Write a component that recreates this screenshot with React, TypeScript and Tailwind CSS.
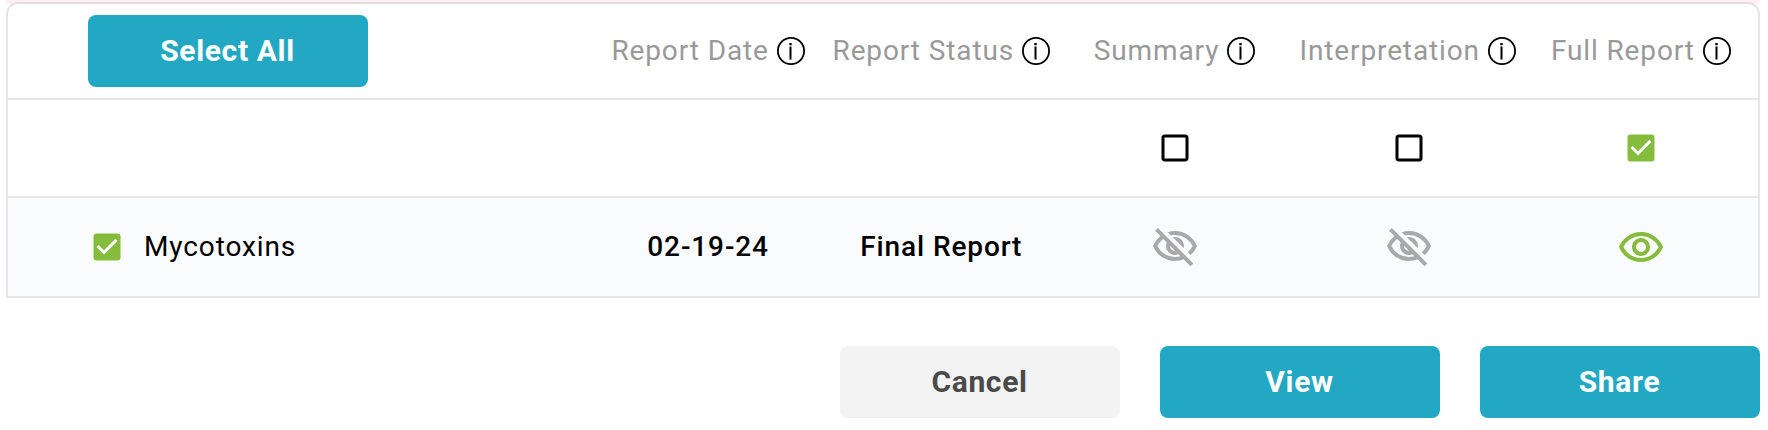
import clsx from 'clsx'
import {
  MdCheckBox,
  MdCheckBoxOutlineBlank,
  MdOutlineVisibility,
  MdOutlineVisibilityOff,
} from 'react-icons/md'

const columns = [
  'Report Date',
  'Report Status',
  'Summary',
  'Interpretation',
  'Full Report',
]

const rowClass =
  'grid grid-cols-[584px_1fr_1fr_1fr_1fr_1fr] items-center border-[#e5e5ea]'

function InfoIcon() {
  return (
    <svg className="size-7 shrink-0" viewBox="0 0 28 28" fill="none">
      <circle cx="14" cy="14" r="13.1" stroke="#000" strokeWidth="1.8" />
      <path d="M12.3 6h2.4v2.2h-2.4zM12.5 9.6h2v12.8h-2z" fill="#000" />
    </svg>
  )
}

function Button({
  label,
  secondary = false,
}: {
  label: string
  secondary?: boolean
}) {
  return (
    <button
      type="button"
      className={clsx(
        'h-[72px] w-[280px] rounded-lg pr-px pb-0.5 text-[30px] font-bold tracking-[0.65px]',
        secondary ? 'bg-[#f3f3f3] text-[#4a4a4a]' : 'bg-[#22a8c3] text-white',
      )}
    >
      {label}
    </button>
  )
}

function Check({ checked = false }: { checked?: boolean }) {
  return checked ? (
    <MdCheckBox className="size-9 text-[#86bc3b]" />
  ) : (
    <MdCheckBoxOutlineBlank className="size-9 text-black" />
  )
}

export default function App() {
  return (
    <div className="h-[430px] w-[1768px] bg-white pr-2 pl-1.5 font-['Roboto',sans-serif]">
      <div className="bg-linear-to-b from-[#fdeff3] from-[4px] to-white to-[4px] pt-0.5">
        <div className="overflow-hidden rounded-t-xl border-2 border-[#e5e5ea] border-t-[#e5dde2] bg-white text-[28px] tracking-[0.88px]">
          <div className={clsx(rowClass, 'h-24 border-b-2')}>
            <div className="pl-20">
              <Button label="Select All" />
            </div>
            {columns.map((name) => (
              <div
                key={name}
                className="flex items-center justify-center gap-2 pr-px whitespace-nowrap text-[#999]"
              >
                {name}
                <InfoIcon />
              </div>
            ))}
          </div>

          <div className={clsx(rowClass, 'h-[98px] border-b-2')}>
            <div className="col-start-4 flex justify-center pl-px">
              <Check />
            </div>
            <div className="flex justify-center pl-px">
              <Check />
            </div>
            <div className="flex justify-center">
              <Check checked />
            </div>
          </div>

          <div className={clsx(rowClass, 'h-[98px] bg-[#fafbfd]')}>
            <div className="flex items-center gap-[19px] pl-[81px]">
              <Check checked />
              <span>Mycotoxins</span>
            </div>
            <div className="pr-px text-center font-medium">02-19-24</div>
            <div className="pr-px text-center font-medium">Final Report</div>
            <MdOutlineVisibilityOff className="ml-px size-12 justify-self-center text-[#a9a9a9]" />
            <MdOutlineVisibilityOff className="ml-px size-12 justify-self-center text-[#a9a9a9]" />
            <MdOutlineVisibility className="mt-0.5 size-12 justify-self-center text-[#86bc3b]" />
          </div>
        </div>
      </div>

      <div className="mt-12 flex justify-end gap-10">
        <Button label="Cancel" secondary />
        <Button label="View" />
        <Button label="Share" />
      </div>
    </div>
  )
}
